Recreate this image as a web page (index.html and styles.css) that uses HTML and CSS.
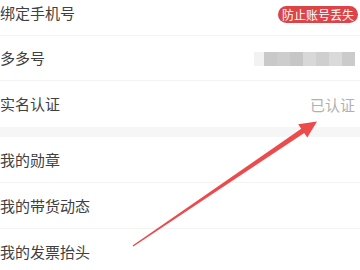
FILE: index.html
```html
<!DOCTYPE html>
<html lang="zh-CN">
<head>
<meta charset="utf-8">
<link rel="stylesheet" href="styles.css">
</head>
<body>
<div class="page">
  <div class="group group-top">
    <div class="row">
      <span class="label">绑定手机号</span>
      <span class="badge">防止账号丢失</span>
    </div>
    <div class="row">
      <span class="label">多多号</span>
      <span class="blur">
        <i class="b1"></i><i class="b2"></i><i class="b3"></i><i class="b4"></i><i class="b5"></i><i class="b6"></i><i class="b7"></i><i class="b8"></i>
      </span>
    </div>
    <div class="row row-last">
      <span class="label">实名认证</span>
      <span class="value">已认证</span>
    </div>
  </div>
  <div class="band"></div>
  <div class="group group-bottom">
    <div class="row"><span class="label">我的勋章</span></div>
    <div class="row"><span class="label">我的带货动态</span></div>
    <div class="row row-last"><span class="label">我的发票抬头</span></div>
  </div>
  <svg class="arrow" width="360" height="270" viewBox="0 0 360 270">
    <polygon points="132.6,245.4 301.2,128.8 298.2,124.3 317,121.5 307.3,137.6 304.2,133.0 133.4,246.6" fill="#ec4a4b"/>
  </svg>
</div>
</body>
</html>
```
FILE: styles.css
```css
html, body {
  margin: 0;
  padding: 0;
  background: #ffffff;
}
body {
  font-family: "Noto Sans CJK SC", "Noto Sans", sans-serif;
  color: #333333;
  overflow: hidden;
}
.page {
  position: relative;
  width: 360px;
  height: 270px;
  overflow: hidden;
}
.group-top {
  margin-top: -10px;
}
.row {
  box-sizing: border-box;
  height: 45px;
  display: flex;
  align-items: center;
  justify-content: space-between;
  padding: 0 5px 0 0;
  border-bottom: 1px solid #f3f3f3;
}
.group-top .row {
  height: 45.5px;
}
.group-bottom .row {
  height: 46px;
}
.row-last {
  border-bottom: none;
}
.label {
  font-size: 15px;
  color: #404040;
  letter-spacing: 0;
}
.badge {
  background: #dc4448;
  color: #ffffff;
  font-size: 12px;
  line-height: 17px;
  padding: 0 4px;
  border-radius: 8.5px;
  margin-top: 4px;
  margin-right: -3px;
}
.value {
  font-size: 15px;
  color: #b0b0b0;
  margin-top: 2px;
}
.blur {
  display: flex;
  height: 14px;
  margin-top: 2px;
}
.blur i {
  display: block;
  width: 13px;
  height: 14px;
}
.blur .b1 { background: #f2f2f2; width: 10px; }
.blur .b2 { background: #c9c9c9; }
.blur .b3 { background: #cdcdcd; }
.blur .b4 { background: #c6c6c6; }
.blur .b5 { background: #d8d8d8; }
.blur .b6 { background: #cfcfcf; }
.blur .b7 { background: #dadada; }
.blur .b8 { background: #cbcbcb; }
.band {
  height: 10px;
  background: #f6f6f6;
}
.arrow {
  position: absolute;
  top: 0;
  left: 0;
  pointer-events: none;
}
```
